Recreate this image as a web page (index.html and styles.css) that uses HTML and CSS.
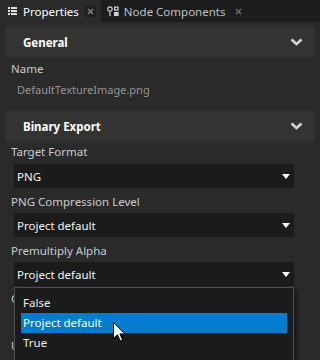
FILE: index.html
```html
<!DOCTYPE html>
<html lang="en">
<head>
  <meta charset="UTF-8">
  <title>Properties</title>
  <link rel="stylesheet" href="styles.css">
</head>
<body>
  <div class="tab-bar">
    <div class="tab active">
      <svg class="tab-icon" width="9" height="8" viewBox="0 0 9 8">
        <rect x="0" y="0" width="2" height="2" fill="#e0e0e0"/>
        <rect x="3" y="0" width="6" height="2" fill="#e0e0e0"/>
        <rect x="0" y="3" width="2" height="2" fill="#e0e0e0"/>
        <rect x="3" y="3" width="6" height="2" fill="#e0e0e0"/>
        <rect x="0" y="6" width="2" height="2" fill="#e0e0e0"/>
        <rect x="3" y="6" width="6" height="2" fill="#e0e0e0"/>
      </svg>
      <span class="tab-title">Properties</span>
      <span class="tab-close boxed">
        <svg width="7" height="7" viewBox="0 0 7 7"><path d="M1 1 L6 6 M6 1 L1 6" stroke="#7a7a7a" stroke-width="1.6"/></svg>
      </span>
    </div>
    <div class="tab">
      <svg class="tab-icon" width="12" height="10" viewBox="0 0 12 10">
        <circle cx="3" cy="3" r="2.2" fill="none" stroke="#d0d4da" stroke-width="1.2"/>
        <path d="M3 5.2 V10" stroke="#d0d4da" stroke-width="1.2"/>
        <rect x="7.6" y="1.1" width="3.4" height="3" fill="none" stroke="#d0d4da" stroke-width="1.2"/>
        <rect x="7" y="6" width="4.6" height="4" fill="#d0d4da"/>
      </svg>
      <span class="tab-title">Node Components</span>
      <span class="tab-close">
        <svg width="7" height="7" viewBox="0 0 7 7"><path d="M1 1 L6 6 M6 1 L1 6" stroke="#6a6a6a" stroke-width="1.6"/></svg>
      </span>
    </div>
  </div>

  <div class="panel">
    <div class="section-header">
      <span>General</span>
      <svg class="chevron" width="13" height="8" viewBox="0 0 13 8"><path d="M1.5 1.5 L6.5 6 L11.5 1.5" fill="none" stroke="#d4d4d4" stroke-width="2.6"/></svg>
    </div>
    <div class="label first">Name</div>
    <div class="value">DefaultTextureImage.png</div>

    <div class="section-header second">
      <span>Binary Export</span>
      <svg class="chevron" width="13" height="8" viewBox="0 0 13 8"><path d="M1.5 1.5 L6.5 6 L11.5 1.5" fill="none" stroke="#d4d4d4" stroke-width="2.6"/></svg>
    </div>

    <div class="field first-field">
      <div class="label">Target Format</div>
      <div class="dropdown"><span>PNG</span><span class="arrow"></span></div>
    </div>
    <div class="field">
      <div class="label">PNG Compression Level</div>
      <div class="dropdown"><span>Project default</span><span class="arrow"></span></div>
    </div>
    <div class="field">
      <div class="label">Premultiply Alpha</div>
      <div class="dropdown open">
        <span>Project default</span><span class="arrow"></span>
        <div class="popup">
          <div class="option">False</div>
          <div class="option selected">Project default</div>
          <div class="option">True</div>
          <svg class="cursor" width="13" height="20" viewBox="0 0 13 20">
            <path d="M0.5 0.5 V16.5 L4.5 12.8 L7.3 19 L9.6 18 L6.9 11.9 L12 11.9 Z" fill="#ffffff" stroke="#000000" stroke-width="1" stroke-linejoin="round"/>
          </svg>
        </div>
      </div>
    </div>
    <!-- rows behind the open list -->
    <div class="label first-covered">Compression</div>
    <div class="spacer"></div>
    <div class="label">Use Mipmaps</div>
  </div>
</body>
</html>
```

FILE: styles.css
```css
body {
  margin: 0;
  padding: 0;
  width: 320px;
  height: 360px;
  overflow: hidden;
  background: #2a2a2a;
  font-family: 'Noto Sans', 'Open Sans', sans-serif;
  font-size: 11px;
  color: #c9ccd0;
}

/* Tabs */
.tab-bar {
  display: flex;
  height: 22px;
  background: #1d1d1d;
}

.tab {
  display: flex;
  align-items: center;
  height: 22px;
  padding: 0 8px 0 6px;
  color: #bcc1c8;
  font-size: 11.5px;
}

.tab.active {
  background: #2a2a2a;
  color: #ffffff;
  padding-left: 8px;
  padding-right: 5px;
}

.tab-icon {
  margin-right: 5px;
}

.tab.active .tab-icon {
  margin-right: 6px;
}

.tab-close {
  display: flex;
  align-items: center;
  justify-content: center;
  width: 11px;
  height: 11px;
  margin-left: 8px;
}

.tab-close.boxed {
  background: #1f1f1f;
  margin-left: 6px;
}

/* Panel */
.panel {
  position: relative;
}

.section-header {
  display: flex;
  align-items: center;
  justify-content: space-between;
  height: 30px;
  margin: 5px 5px 0;
  padding: 0 12px 0 18px;
  background: #333333;
  color: #ffffff;
  font-weight: bold;
  font-size: 11.5px;
}

.section-header.second {
  margin-top: 13px;
}

.label {
  line-height: 16px;
  height: 16px;
  padding-left: 11px;
  margin-top: 6px;
  color: #c9ccd0;
  font-size: 11.5px;
}

.label.first {
  margin-top: 4px;
}

.label.first-covered {
  margin-top: 5px;
}

.value {
  line-height: 16px;
  margin-top: 5px;
  padding-left: 17px;
  color: #959595;
}

.field .dropdown {
  margin-top: 3px;
}

.first-field .label {
  margin-top: 3px;
}

.first-field .dropdown {
  margin-top: 4px;
}

.dropdown {
  position: relative;
  display: flex;
  align-items: center;
  justify-content: space-between;
  width: 280px;
  height: 24px;
  margin-left: 14px;
  padding: 0 4px 0 3px;
  box-sizing: border-box;
  background: #1b1b1b;
  color: #f2f2f2;
  font-size: 11.5px;
}

.arrow {
  width: 0;
  height: 0;
  border-left: 4.5px solid transparent;
  border-right: 4.5px solid transparent;
  border-top: 5px solid #ffffff;
}

.popup {
  position: absolute;
  top: 25px;
  left: 0;
  width: 280px;
  height: 80px;
  box-sizing: border-box;
  padding: 5px 6px 0;
  background: #1b1b1b;
  border: 1px solid #4e4e4e;
  box-shadow: 3px 2px 4px rgba(0, 0, 0, 0.45);
  z-index: 10;
}

.option {
  height: 20px;
  line-height: 20px;
  padding-left: 2px;
  color: #eeeeee;
}

.option.selected {
  background: #057ccc;
  color: #ffffff;
}

.cursor {
  position: absolute;
  left: 98px;
  top: 34px;
}

.spacer {
  height: 25px;
}
```
